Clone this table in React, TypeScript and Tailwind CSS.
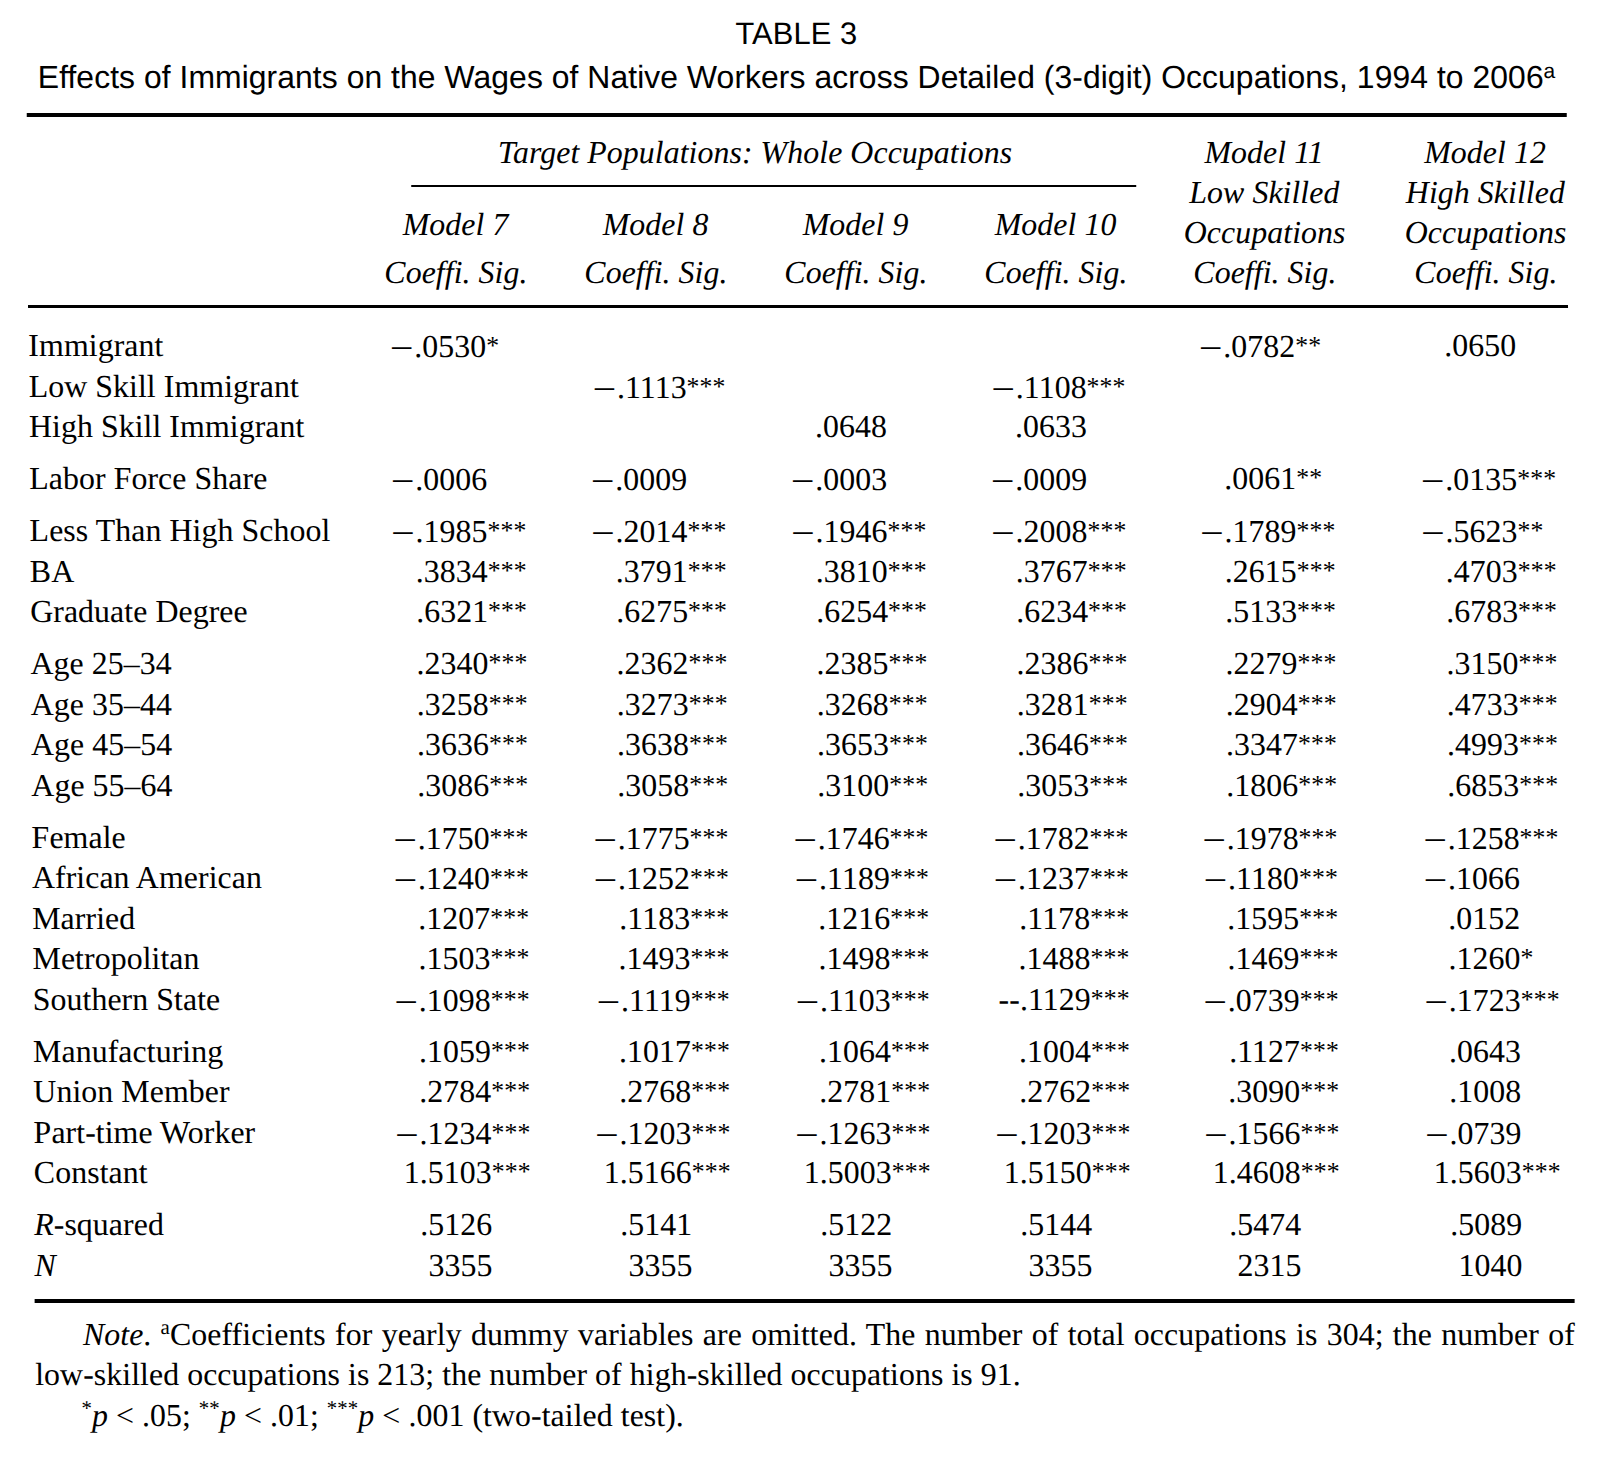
import type { ReactNode } from "react"

const cols = "grid grid-cols-[328px_200px_200px_200px_200px_218px_224px]"
const numW = ["w-[130px]", "w-[130px]", "w-[130px]", "w-[130px]", "w-[139px]", "w-[142px]"]

type Row = { label: ReactNode; vals: string[] }

const groups: Row[][] = [
  [
    { label: "Immigrant", vals: ["−.0530*", "", "", "", "−.0782**", ".0650"] },
    { label: "Low Skill Immigrant", vals: ["", "−.1113***", "", "−.1108***", "", ""] },
    { label: "High Skill Immigrant", vals: ["", "", ".0648", ".0633", "", ""] },
  ],
  [{ label: "Labor Force Share", vals: ["−.0006", "−.0009", "−.0003", "−.0009", ".0061**", "−.0135***"] }],
  [
    { label: "Less Than High School", vals: ["−.1985***", "−.2014***", "−.1946***", "−.2008***", "−.1789***", "−.5623**"] },
    { label: "BA", vals: [".3834***", ".3791***", ".3810***", ".3767***", ".2615***", ".4703***"] },
    { label: "Graduate Degree", vals: [".6321***", ".6275***", ".6254***", ".6234***", ".5133***", ".6783***"] },
  ],
  [
    { label: "Age 25–34", vals: [".2340***", ".2362***", ".2385***", ".2386***", ".2279***", ".3150***"] },
    { label: "Age 35–44", vals: [".3258***", ".3273***", ".3268***", ".3281***", ".2904***", ".4733***"] },
    { label: "Age 45–54", vals: [".3636***", ".3638***", ".3653***", ".3646***", ".3347***", ".4993***"] },
    { label: "Age 55–64", vals: [".3086***", ".3058***", ".3100***", ".3053***", ".1806***", ".6853***"] },
  ],
  [
    { label: "Female", vals: ["−.1750***", "−.1775***", "−.1746***", "−.1782***", "−.1978***", "−.1258***"] },
    { label: "African American", vals: ["−.1240***", "−.1252***", "−.1189***", "−.1237***", "−.1180***", "−.1066"] },
    { label: "Married", vals: [".1207***", ".1183***", ".1216***", ".1178***", ".1595***", ".0152"] },
    { label: "Metropolitan", vals: [".1503***", ".1493***", ".1498***", ".1488***", ".1469***", ".1260*"] },
    { label: "Southern State", vals: ["−.1098***", "−.1119***", "−.1103***", "--.1129***", "−.0739***", "−.1723***"] },
  ],
  [
    { label: "Manufacturing", vals: [".1059***", ".1017***", ".1064***", ".1004***", ".1127***", ".0643"] },
    { label: "Union Member", vals: [".2784***", ".2768***", ".2781***", ".2762***", ".3090***", ".1008"] },
    { label: "Part-time Worker", vals: ["−.1234***", "−.1203***", "−.1263***", "−.1203***", "−.1566***", "−.0739"] },
    { label: "Constant", vals: ["1.5103***", "1.5166***", "1.5003***", "1.5150***", "1.4608***", "1.5603***"] },
  ],
  [
    { label: <><i>R</i>-squared</>, vals: [".5126", ".5141", ".5122", ".5144", ".5474", ".5089"] },
    { label: <i>N</i>, vals: ["3355", "3355", "3355", "3355", "2315", "1040"] },
  ],
]

function Value({ v, i }: { v: string; i: number }) {
  const m = v.match(/^([^*]*)(\**)$/)
  let num = m ? m[1] : v
  const stars = m ? m[2] : ""
  const neg = num.startsWith("−")
  if (neg) num = num.slice(1)
  return (
    <>
      <span className={`${numW[i]} inline-block text-right`}>
        {neg && <span className="pr-[3px] text-[38px] leading-none">–</span>}
        {num}
      </span>
      {stars && <span className="text-[26px] leading-none align-[3px]">{stars}</span>}
    </>
  )
}

function ModelHead({ lines }: { lines: string[] }) {
  return (
    <div className="flex flex-col items-center">
      {lines.map((l) => (
        <div key={l} className="h-[40px] whitespace-nowrap">{l}</div>
      ))}
    </div>
  )
}

export default function App() {
  return (
    <div className="min-h-[1462px] w-[1600px] bg-white text-black">
      <div className="ml-[26px] w-[1540px] origin-top-left skew-x-[0.38deg] pt-[16px]">
        <div className="text-center font-['Liberation_Sans',Arial,sans-serif]">
          <div className="text-[31px] leading-[36px]">TABLE 3</div>
          <div className="mt-[5px] text-[32px] leading-[40px] whitespace-nowrap">
            Effects of Immigrants on the Wages of Native Workers across Detailed (3-digit) Occupations, 1994 to 2006
            <sup className="text-[21px]">a</sup>
          </div>
        </div>

        <div className="mt-[16px] h-[4px] bg-black" />

        <div className="font-['Liberation_Serif',serif] text-[32px]">
          <div className={`${cols} w-[1570px] pt-[15px] italic leading-[40px]`}>
            <div />
            <div className="col-span-4 flex flex-col">
              <div className="h-[40px] text-center">Target Populations: Whole Occupations</div>
              <div className="ml-[56px] mr-[19px] mt-[13px] h-[2px] bg-black" />
              <div className="mt-[17px] grid grid-cols-4">
                {["Model 7", "Model 8", "Model 9", "Model 10"].map((m) => (
                  <div key={m} className="flex flex-col items-center">
                    <div className="h-[40px]">{m}</div>
                    <div className="mt-[8px] h-[40px]">Coeffi. Sig.</div>
                  </div>
                ))}
              </div>
            </div>
            <ModelHead lines={["Model 11", "Low Skilled", "Occupations", "Coeffi. Sig."]} />
            <ModelHead lines={["Model 12", "High Skilled", "Occupations", "Coeffi. Sig."]} />
          </div>

          <div className="mt-[13px] h-[3px] bg-black" />

          <div className="pt-[17px]">
            {groups.map((g, gi) => (
              <div key={gi} className={gi > 0 ? "mt-[11.5px]" : ""}>
                {g.map((r, ri) => (
                  <div key={ri} className={`${cols} h-[40.5px] w-[1570px] leading-[40.5px] whitespace-nowrap`}>
                    <div>{r.label}</div>
                    {r.vals.map((v, i) => (
                      <div key={i}>{v && <Value v={v} i={i} />}</div>
                    ))}
                  </div>
                ))}
              </div>
            ))}
          </div>

          <div className="mt-[13.5px] h-[4px] bg-black" />

          <div className="mt-[11px] leading-[40.5px]">
            <div className="pl-[48px] text-justify [text-align-last:justify]">
              <i>Note</i>. <sup className="text-[21px]">a</sup>Coefficients for yearly dummy variables are omitted. The number of total occupations is 304; the number of
            </div>
            <div>low-skilled occupations is 213; the number of high-skilled occupations is 91.</div>
            <div className="pl-[46px]">
              <sup className="text-[21px]">*</sup><i>p</i> &lt; .05; <sup className="text-[21px]">**</sup><i>p</i> &lt; .01;{" "}
              <sup className="text-[21px]">***</sup><i>p</i> &lt; .001 (two-tailed test).
            </div>
          </div>
        </div>
      </div>
    </div>
  )
}
